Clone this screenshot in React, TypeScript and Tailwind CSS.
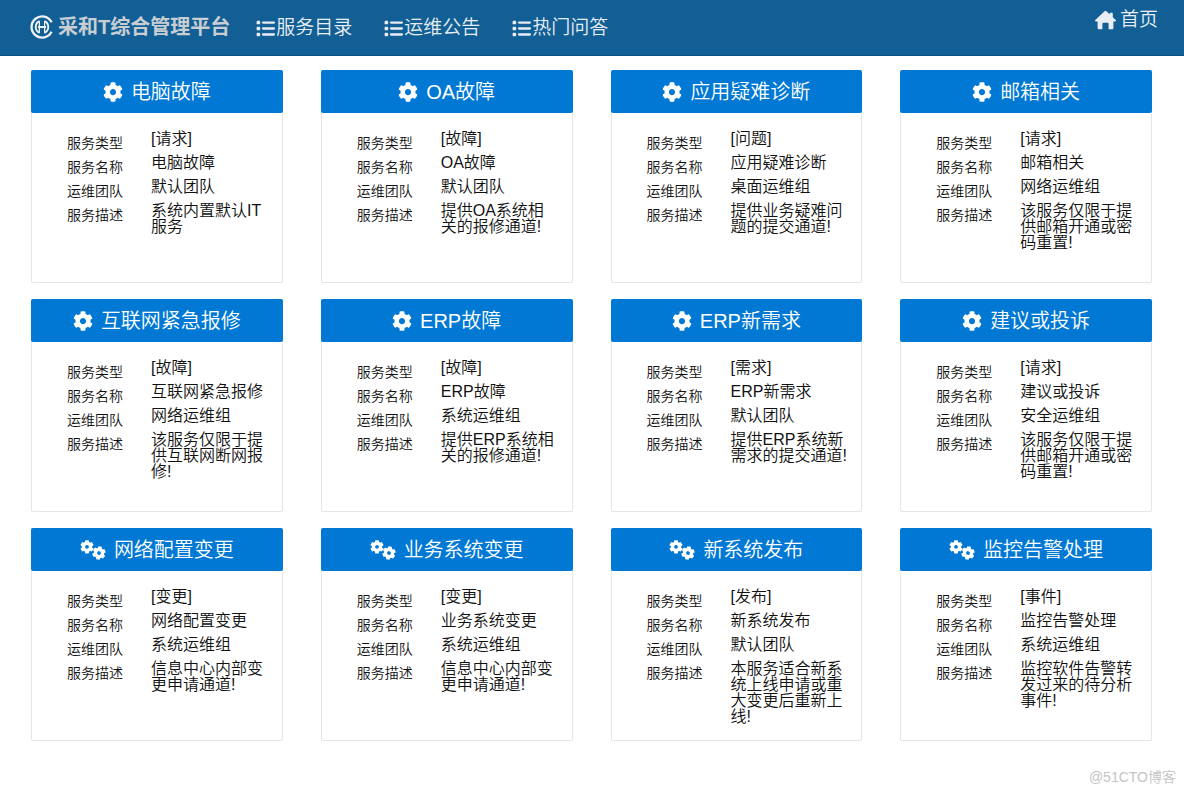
import { FaCog } from "react-icons/fa"
import { FaList } from "react-icons/fa6"

type Service = {
  name: string
  type: string
  team: string
  desc: string
  double?: boolean
}

const navItems = ["服务目录", "运维公告", "热门问答"]

const services: Service[] = [
  { name: "电脑故障", type: "请求", team: "默认团队", desc: "系统内置默认IT服务" },
  { name: "OA故障", type: "故障", team: "默认团队", desc: "提供OA系统相关的报修通道!" },
  { name: "应用疑难诊断", type: "问题", team: "桌面运维组", desc: "提供业务疑难问题的提交通道!" },
  { name: "邮箱相关", type: "请求", team: "网络运维组", desc: "该服务仅限于提供邮箱开通或密码重置!" },
  { name: "互联网紧急报修", type: "故障", team: "网络运维组", desc: "该服务仅限于提供互联网断网报修!" },
  { name: "ERP故障", type: "故障", team: "系统运维组", desc: "提供ERP系统相关的报修通道!" },
  { name: "ERP新需求", type: "需求", team: "默认团队", desc: "提供ERP系统新需求的提交通道!" },
  { name: "建议或投诉", type: "请求", team: "安全运维组", desc: "该服务仅限于提供邮箱开通或密码重置!" },
  { name: "网络配置变更", type: "变更", team: "系统运维组", desc: "信息中心内部变更申请通道!", double: true },
  { name: "业务系统变更", type: "变更", team: "系统运维组", desc: "信息中心内部变更申请通道!", double: true },
  { name: "新系统发布", type: "发布", team: "默认团队", desc: "本服务适合新系统上线申请或重大变更后重新上线!", double: true },
  { name: "监控告警处理", type: "事件", team: "系统运维组", desc: "监控软件告警转发过来的待分析事件!", double: true },
]

function Logo() {
  return (
    <svg className="w-6 h-6 shrink-0 text-[#eef3f6]" viewBox="0 0 24 24" fill="none" stroke="currentColor" aria-hidden="true">
      <path d="M21.6 7.2A10.6 10.6 0 1 0 21.6 16.8" strokeWidth={2.3} />
      <path d="M9.6 6.2A6.3 6.3 0 0 0 9.6 17.8M14.4 6.2A6.3 6.3 0 0 1 14.4 17.8" strokeWidth={1.9} />
      <path d="M9.4 6.2V17.8M14.6 6.2V17.8" strokeWidth={1.2} />
      <path d="M8 12H16" strokeWidth={2} />
    </svg>
  )
}

function HomeIcon() {
  return (
    <svg className="w-[21px] h-5 shrink-0" viewBox="0 0 21 20" fill="currentColor" aria-hidden="true">
      <path d="M9.6 1.2a1.3 1.3 0 0 1 1.8 0L14.6 4.2V3.4a.6.6 0 0 1 .6-.6h2a.6.6 0 0 1 .6.6v3.9l2.9 2.8c.6.6.2 1.4-.6 1.4h-1.7v6.6a1.2 1.2 0 0 1-1.2 1.2h-3.6v-5.5a1 1 0 0 0-1-1H8.4a1 1 0 0 0-1 1v5.5H3.8a1.2 1.2 0 0 1-1.2-1.2v-6.6H.9c-.8 0-1.2-.8-.6-1.4z" />
    </svg>
  )
}

const tooth = "M-1.7-6.6h3.4l.6 2.8h-4.6z"

function Gear({ x, y, turn }: { x: number; y: number; turn: number }) {
  return (
    <g transform={`translate(${x} ${y}) rotate(${turn})`}>
      <circle r={3.5} fill="none" stroke="currentColor" strokeWidth={3.2} />
      {[0, 60, 120, 180, 240, 300].map((angle) => (
        <path key={angle} d={tooth} fill="currentColor" transform={`rotate(${angle})`} />
      ))}
    </g>
  )
}

function DoubleGear() {
  return (
    <svg className="w-[26px] h-5 shrink-0" viewBox="0 0 26 20" aria-hidden="true">
      <Gear x={7} y={6.8} turn={0} />
      <Gear x={19} y={13} turn={10} />
    </svg>
  )
}

function ServiceCard({ service }: { service: Service }) {
  const rows = [
    ["服务类型", `[${service.type}]`],
    ["服务名称", service.name],
    ["运维团队", service.team],
    ["服务描述", service.desc],
  ]

  return (
    <article className="min-h-[213px] rounded-xs shadow-[inset_0_0_0_1px_#e2e5e9]">
      <h2>
        <a
          href="#"
          className="flex h-[43px] items-center justify-center gap-2 rounded-xs bg-[#0078d4] text-xl font-[350] text-white"
        >
          {service.double ? <DoubleGear /> : <FaCog className="w-5 h-5 shrink-0" />}
          {service.name}
        </a>
      </h2>
      <dl className="grid grid-cols-[84px_1fr] gap-y-1 pt-[18px] pb-3 pl-9 pr-[13px] text-[#111]">
        {rows.map(([label, value]) => (
          <div key={label} className="contents">
            <dt className="pt-1 text-sm leading-4">{label}</dt>
            <dd className="text-base leading-4">{value}</dd>
          </div>
        ))}
      </dl>
    </article>
  )
}

export default function App() {
  return (
    <div className="bg-white font-['Liberation_Sans','Noto_Sans_CJK_SC',sans-serif] font-[350]" lang="zh-CN">
      <header className="flex h-14 justify-between border-b border-[#0b4f80] bg-[#125f95] pl-[30px] pr-[26px] text-[#e8eef3]">
        <div className="flex h-[54px] items-center">
          <a href="#" className="flex items-center gap-1 text-xl font-bold text-[#c9ced3]">
            <Logo />
            采和T综合管理平台
          </a>
          <nav className="ml-[26px] flex gap-8 pt-[2px] text-[19px]">
            {navItems.map((item) => (
              <a key={item} href="#" className="flex items-center gap-px">
                <FaList className="w-[19px] h-[19px]" />
                {item}
              </a>
            ))}
          </nav>
        </div>
        <a href="#" className="flex h-10 items-center gap-1 text-[19px]">
          <HomeIcon />
          首页
        </a>
      </header>

      <main className="grid grid-cols-4 gap-x-[38px] gap-y-4 pl-[31px] pr-8 pt-[14px]">
        {services.map((service) => (
          <ServiceCard key={service.name} service={service} />
        ))}
      </main>

      <footer className="pt-[26px] pr-2 text-right text-sm text-[#c4c4c4]">
        @51CTO博客
      </footer>
    </div>
  )
}
